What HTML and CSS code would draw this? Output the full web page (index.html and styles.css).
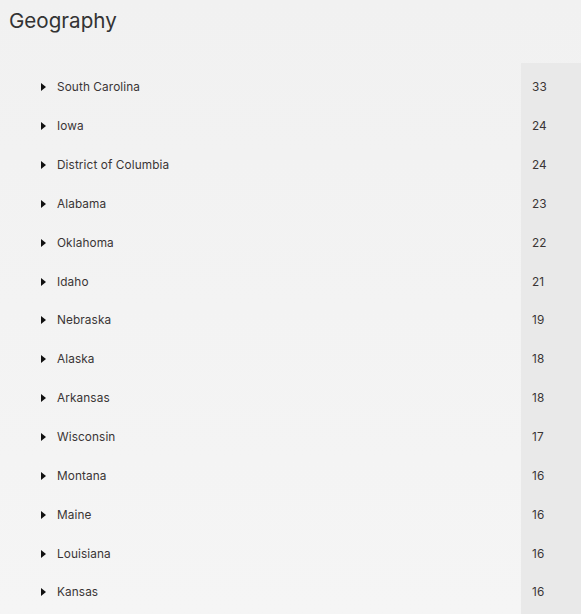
FILE: index.html
```html
<!DOCTYPE html>
<html>
<head>
<meta charset="utf-8">
<link rel="stylesheet" href="styles.css">
</head>
<body>
<div class="page">
  <h1 class="title">Geography</h1>
  <div class="table">
    <div class="names">
      <div class="row"><span class="tri"></span><span class="name">South Carolina</span></div>
      <div class="row"><span class="tri"></span><span class="name">Iowa</span></div>
      <div class="row"><span class="tri"></span><span class="name">District of Columbia</span></div>
      <div class="row"><span class="tri"></span><span class="name">Alabama</span></div>
      <div class="row"><span class="tri"></span><span class="name">Oklahoma</span></div>
      <div class="row"><span class="tri"></span><span class="name">Idaho</span></div>
      <div class="row"><span class="tri"></span><span class="name">Nebraska</span></div>
      <div class="row"><span class="tri"></span><span class="name">Alaska</span></div>
      <div class="row"><span class="tri"></span><span class="name">Arkansas</span></div>
      <div class="row"><span class="tri"></span><span class="name">Wisconsin</span></div>
      <div class="row"><span class="tri"></span><span class="name">Montana</span></div>
      <div class="row"><span class="tri"></span><span class="name">Maine</span></div>
      <div class="row"><span class="tri"></span><span class="name">Louisiana</span></div>
      <div class="row"><span class="tri"></span><span class="name">Kansas</span></div>
    </div>
    <div class="counts">
      <div class="row">33</div>
      <div class="row">24</div>
      <div class="row">24</div>
      <div class="row">23</div>
      <div class="row">22</div>
      <div class="row">21</div>
      <div class="row">19</div>
      <div class="row">18</div>
      <div class="row">18</div>
      <div class="row">17</div>
      <div class="row">16</div>
      <div class="row">16</div>
      <div class="row">16</div>
      <div class="row">16</div>
    </div>
  </div>
</div>
</body>
</html>
```

FILE: styles.css
```css
html, body {
  margin: 0;
  padding: 0;
}
body {
  width: 581px;
  height: 614px;
  overflow: hidden;
  background: linear-gradient(#f1f1f1, #f5f5f5);
  font-family: Inter, "Noto Sans", sans-serif;
  color: #3a3535;
}
.page {
  display: flex;
  flex-direction: column;
}
.title {
  margin: 0;
  padding: 9px 0 0 9px;
  height: 63px;
  box-sizing: border-box;
  font-size: 20.6px;
  font-weight: 400;
  line-height: 24px;
  color: #333;
}
.table {
  display: flex;
}
.names {
  flex: 1;
  padding-top: 5px;
}
.counts {
  width: 60px;
  background: #e9e9e9;
  padding-top: 5px;
  height: 560px;
}
.row {
  height: 38.85px;
  display: flex;
  align-items: center;
  font-size: 11.8px;
  letter-spacing: 0.1px;
}
.names .row {
  padding-left: 41px;
}
.counts .row {
  padding-left: 11px;
}
.tri {
  width: 0;
  height: 0;
  border-top: 4px solid transparent;
  border-bottom: 4px solid transparent;
  border-left: 5px solid #111;
  margin-right: 11px;
}
```
